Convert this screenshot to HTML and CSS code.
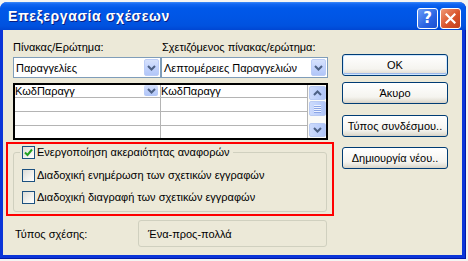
FILE: index.html
```html
<!DOCTYPE html>
<html>
<head>
  <meta charset="utf-8">
  <link rel="stylesheet" href="styles.css">
</head>
<body>
  <div class="window">
    <div class="titlebar">
      <span class="title">Επεξεργασία σχέσεων</span>
      <div class="caption-buttons">
        <span class="cap-btn help">?</span>
        <span class="cap-btn close">
          <svg width="11" height="11" viewBox="0 0 11 11"><path d="M1.5 1.5 L9.5 9.5 M9.5 1.5 L1.5 9.5" stroke="#fff" stroke-width="2.2" stroke-linecap="square"/></svg>
        </span>
      </div>
    </div>

    <div class="client">
      <div class="main">
        <div class="fields">
          <div class="label">Πίνακας/Ερώτημα:</div>
          <div class="label label-right">Σχετιζόμενος πίνακας/ερώτημα:</div>
          <div class="combo">
            <span class="combo-text">Παραγγελίες</span>
            <span class="drop-btn"><svg width="9" height="6" viewBox="0 0 9 6"><path d="M1 1 L4.5 4.5 L8 1" fill="none" stroke="#4d6185" stroke-width="2"/></svg></span>
          </div>
          <div class="combo">
            <span class="combo-text">Λεπτομέρειες Παραγγελιών</span>
            <span class="drop-btn"><svg width="9" height="6" viewBox="0 0 9 6"><path d="M1 1 L4.5 4.5 L8 1" fill="none" stroke="#4d6185" stroke-width="2"/></svg></span>
          </div>
        </div>

        <div class="grid">
          <div class="grid-rows">
            <div class="row row-first">
              <div class="cell cell-left">
                <span>ΚωδΠαραγγ</span>
                <span class="mini-drop"><svg width="9" height="6" viewBox="0 0 9 6"><path d="M1 1 L4.5 4.5 L8 1" fill="none" stroke="#4d6185" stroke-width="2"/></svg></span>
              </div>
              <div class="cell">ΚωδΠαραγγ</div>
            </div>
            <div class="row"><div class="cell cell-left"></div><div class="cell"></div></div>
            <div class="row"><div class="cell cell-left"></div><div class="cell"></div></div>
            <div class="row row-last"><div class="cell cell-left"></div><div class="cell"></div></div>
          </div>
          <div class="scrollbar">
            <span class="scroll-btn"><svg width="9" height="6" viewBox="0 0 9 6"><path d="M1 5 L4.5 1.5 L8 5" fill="none" stroke="#4d6185" stroke-width="2"/></svg></span>
            <span class="scroll-thumb"><i></i><i></i><i></i><i></i></span>
            <span class="scroll-btn scroll-down"><svg width="9" height="6" viewBox="0 0 9 6"><path d="M1 1 L4.5 4.5 L8 1" fill="none" stroke="#4d6185" stroke-width="2"/></svg></span>
          </div>
        </div>

        <div class="highlight">
          <fieldset class="group">
            <legend class="check-row">
              <span class="checkbox checked"><svg width="9" height="9" viewBox="0 0 9 9"><path d="M1 4.5 L3.5 7 L8 1.5" fill="none" stroke="#21a121" stroke-width="2"/></svg></span>
              Ενεργοποίηση ακεραιότητας αναφορών
            </legend>
            <div class="check-row row-second">
              <span class="checkbox"></span>
              Διαδοχική ενημέρωση των σχετικών εγγραφών
            </div>
            <div class="check-row row-third">
              <span class="checkbox"></span>
              Διαδοχική διαγραφή των σχετικών εγγραφών
            </div>
          </fieldset>
        </div>

        <div class="rel-row">
          <span class="rel-label">Τύπος σχέσης:</span>
          <span class="rel-value">Ένα-προς-πολλά</span>
        </div>
      </div>

      <div class="buttons">
        <div class="btn btn-default">OK</div>
        <div class="btn btn-cancel">Άκυρο</div>
        <div class="btn btn-join">Τύπος συνδέσμου..</div>
        <div class="btn btn-new">Δημιουργία νέου..</div>
      </div>
    </div>
  </div>
</body>
</html>
```

FILE: styles.css
```css
body {
  margin: 0;
  padding: 0;
  background-color: #f4f4f2;
  font-family: 'Liberation Sans', Arial, sans-serif;
  font-size: 11px;
  color: #000;
}

.window {
  margin-top: 2px;
  width: 466px;
  height: 257px;
  box-sizing: border-box;
  background: #0b35d8;
  border-radius: 7px 7px 0 0;
  box-shadow: inset -1px -1px 0 #0019a8;
  display: flex;
  flex-direction: column;
}

.titlebar {
  height: 28px;
  display: flex;
  justify-content: space-between;
  align-items: flex-start;
  padding: 0 5px 0 8px;
  border-radius: 7px 7px 0 0;
  background: linear-gradient(#3d8bf8 0, #1166f2 2px, #0058e9 6px, #0056e6 50%, #0052df 85%, #0046d2 100%);
}

.title {
  margin-top: 6px;
  font-size: 14px;
  font-weight: bold;
  color: #fff;
  letter-spacing: 0.6px;
  text-shadow: 1px 1px 0 #0a1e82;
}

.caption-buttons {
  display: flex;
  gap: 2px;
  margin-top: 6px;
}

.cap-btn {
  width: 21px;
  height: 21px;
  box-sizing: border-box;
  border: 1px solid #fff;
  border-radius: 3px;
  display: flex;
  justify-content: center;
  align-items: center;
}

.help {
  background: linear-gradient(135deg, #6a9cf7, #2a63e3 60%, #1c4fd0);
  color: #fff;
  font-family: 'DejaVu Sans', sans-serif;
  font-size: 15px;
  font-weight: bold;
  line-height: 19px;
}

.close {
  background: linear-gradient(135deg, #f09a78, #d9542b 55%, #c23d1b);
}

.client {
  flex: 1;
  margin: 0 4px 4px 3px;
  background: #ece9d8;
  display: flex;
  gap: 14px;
  padding: 11px 0 0 10px;
}

.main {
  width: 315px;
  display: flex;
  flex-direction: column;
}

.fields {
  display: grid;
  grid-template-columns: 148px 167px;
  row-gap: 3px;
}

.label {
  line-height: 13px;
  white-space: nowrap;
}

.label-right {
  padding-left: 1px;
}

.combo {
  height: 21px;
  box-sizing: border-box;
  border: 1px solid #7f9db9;
  background: #fff;
  display: flex;
  align-items: center;
  justify-content: space-between;
  padding: 0 1px 0 2px;
}

.combo-text {
  white-space: nowrap;
}

.drop-btn {
  width: 15px;
  height: 17px;
  box-sizing: border-box;
  border: 1px solid #bccdf7;
  border-radius: 2px;
  background: linear-gradient(#d7e2fc, #c3d3fd 50%, #b1c6f8);
  display: flex;
  justify-content: center;
  align-items: center;
}

.grid {
  margin-top: 5px;
  height: 57px;
  box-sizing: border-box;
  border: 2px solid #000;
  background: #fff;
  display: flex;
}

.grid-rows {
  width: 293px;
  display: flex;
  flex-direction: column;
}

.row {
  height: 14px;
  box-sizing: border-box;
  display: grid;
  grid-template-columns: 146px 147px;
  border-bottom: 1px solid #b4b4b4;
}

.row-first {
  height: 13px;
}

.row-last {
  height: 12px;
  border-bottom: none;
}

.cell {
  border-right: 1px solid #b4b4b4;
  line-height: 12px;
  padding-left: 0;
  white-space: nowrap;
}

.cell-left {
  display: flex;
  justify-content: space-between;
  align-items: flex-start;
}

.mini-drop {
  width: 14px;
  height: 11px;
  margin: 0 2px 0 0;
  box-sizing: border-box;
  border-radius: 2px;
  background: linear-gradient(#d7e2fc, #bfd0fb 50%, #b1c6f8);
  display: flex;
  justify-content: center;
  align-items: center;
}

.scrollbar {
  flex: 1;
  background: #fbfbf8;
  display: flex;
  flex-direction: column;
  padding: 1px 0 1px 1px;
}

.scroll-btn,
.scroll-thumb {
  height: 14px;
  box-sizing: border-box;
  border: 1px solid #b9cbf3;
  border-radius: 2px;
  background: linear-gradient(90deg, #cddbfc, #bccffb 60%, #b0c5f7);
  display: flex;
  justify-content: center;
  align-items: center;
}

.scroll-thumb {
  margin-top: 1px;
  height: 15px;
  flex-direction: column;
  gap: 1px;
}

.scroll-thumb i {
  display: block;
  width: 7px;
  height: 1px;
  background: #eef3fe;
  box-shadow: 0 1px 0 #8ca6e6;
}

.scroll-down {
  margin-top: auto;
}

.highlight {
  margin: 2px -6px 0 -7px;
  border: 2px solid #ff0000;
  padding: 2px 5px 2px 5px;
}

.group {
  margin: 0;
  min-inline-size: 0;
  border: 1px solid #d0d0bf;
  border-radius: 3px;
  padding: 0 0 7px 6px;
}

.check-row {
  display: flex;
  align-items: center;
  height: 13px;
  line-height: 13px;
  white-space: nowrap;
}

legend.check-row {
  padding: 0 3px 0 2px;
}

.row-second {
  margin: 10px 0 0 2px;
}

.row-third {
  margin: 9px 0 0 2px;
}

.checkbox {
  width: 13px;
  height: 13px;
  box-sizing: border-box;
  border: 1px solid #1c5180;
  background: linear-gradient(135deg, #dcdcd7, #f6f6f3 70%, #fff);
  margin-right: 2px;
  display: flex;
  justify-content: center;
  align-items: center;
  flex-shrink: 0;
}

.rel-row {
  margin-top: 4px;
  display: flex;
  align-items: center;
}

.rel-label {
  width: 123px;
  padding-left: 2px;
}

.rel-value {
  width: 189px;
  height: 27px;
  box-sizing: border-box;
  border: 1px solid #d0d0bf;
  border-radius: 3px;
  padding-left: 9px;
  display: flex;
  align-items: center;
}

.buttons {
  width: 106px;
  margin-top: 13px;
  display: flex;
  flex-direction: column;
}

.btn {
  height: 22px;
  box-sizing: border-box;
  border: 1px solid #003c74;
  border-radius: 3px;
  background: linear-gradient(#fff, #f5f4ef 70%, #e3e0d6 90%, #d6d0c5);
  display: flex;
  justify-content: center;
  align-items: center;
  white-space: nowrap;
}

.btn-default {
  box-shadow: inset 0 0 0 1px #cee7ff, inset 0 -1px 0 1px #9db9eb;
}

.btn-cancel {
  margin-top: 6px;
}

.btn-join {
  margin-top: 11px;
}

.btn-new {
  margin-top: 10px;
}
```
